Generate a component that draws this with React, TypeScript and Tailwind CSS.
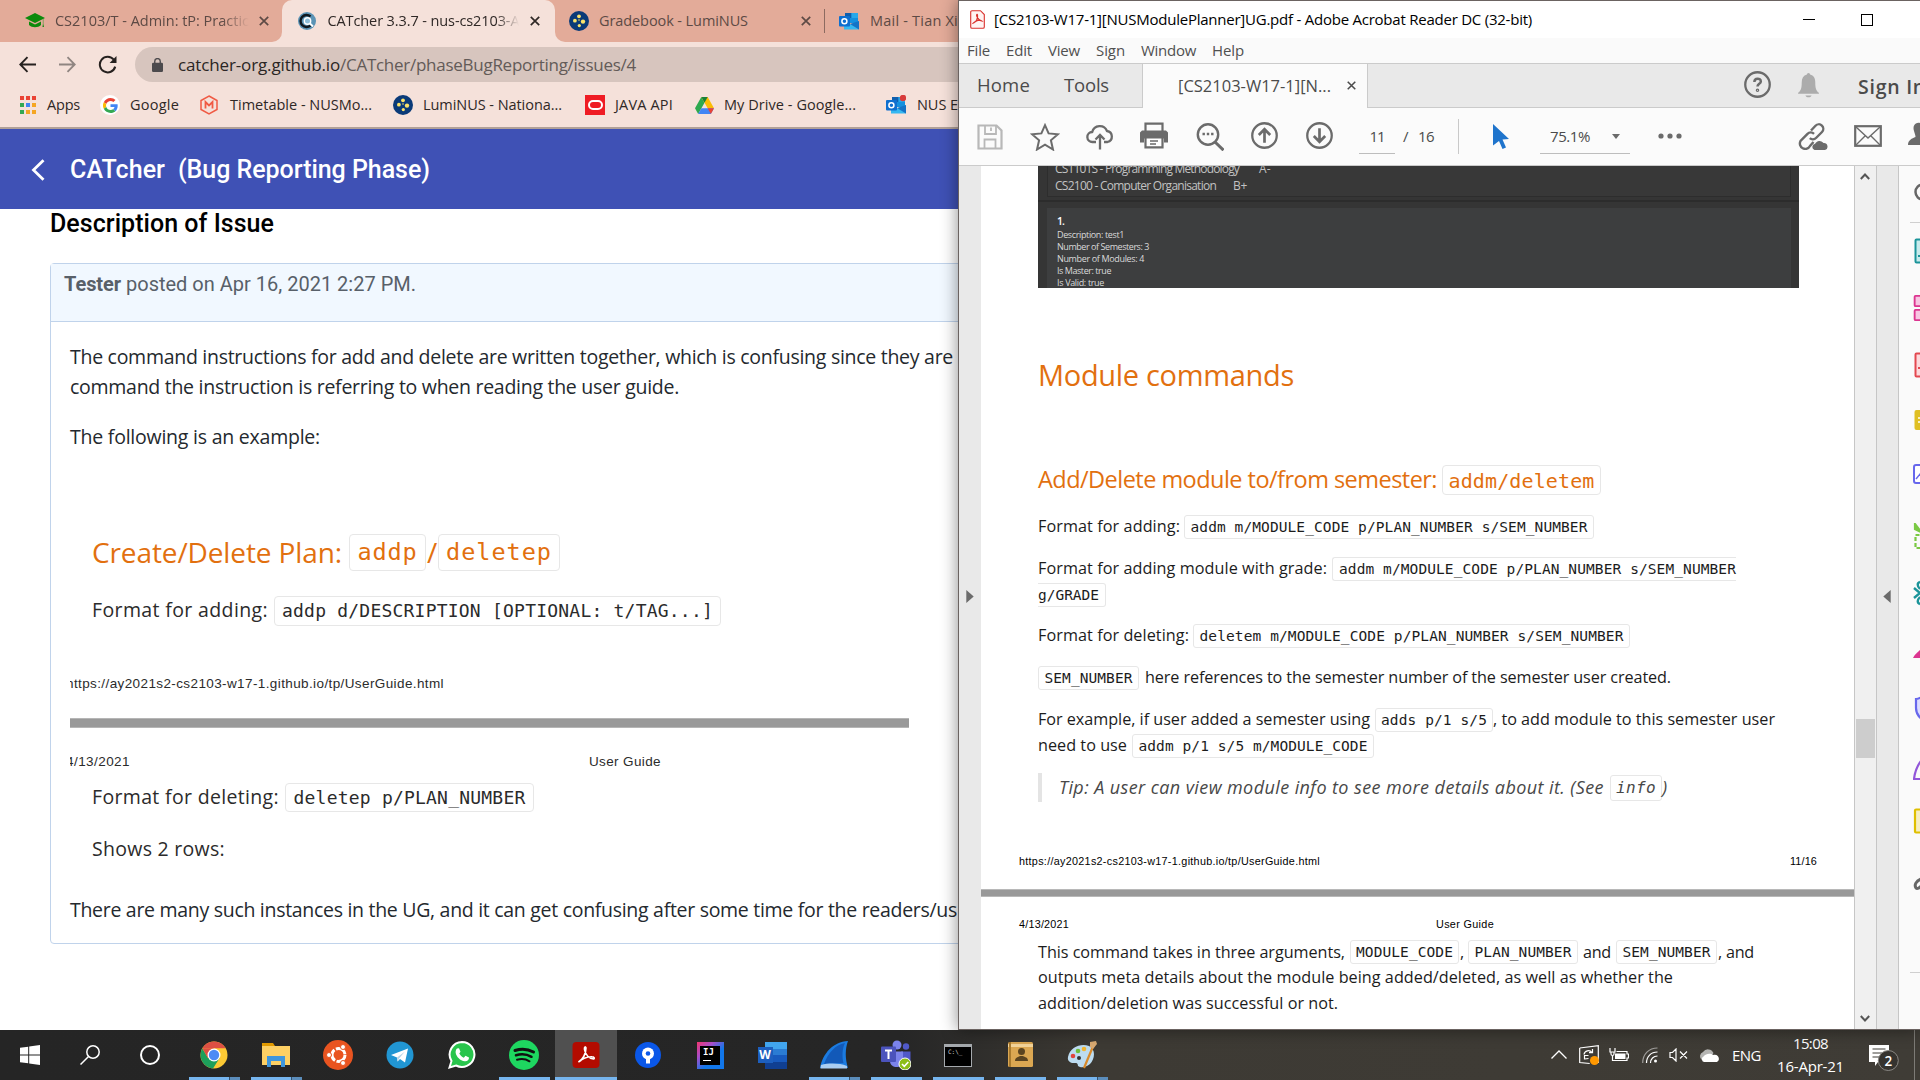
import React, { useLayoutEffect, useRef } from "react";

type FitProps = { className: string; children: string };

/* Single line of text whose tracking is adjusted so that it fills its box. */
function Fit({ className, children }: FitProps) {
  const box = useRef<HTMLSpanElement>(null);
  const text = useRef<HTMLSpanElement>(null);
  useLayoutEffect(() => {
    const b = box.current;
    const t = text.current;
    if (!b || !t) return;
    t.style.letterSpacing = "0px";
    const room = b.getBoundingClientRect().width - t.getBoundingClientRect().width;
    t.style.letterSpacing = `${room / children.length}px`;
  }, [children]);
  return (
    <span ref={box} className={`block shrink-0 whitespace-pre leading-none ${className}`}>
      <span ref={text}>{children}</span>
    </span>
  );
}

function Code({ box, text, children }: { box: string; text: string; children: string }) {
  return (
    <span className={`flex shrink-0 items-center justify-center border-[#e7e7e7] ${box}`}>
      <Fit className={`font-['DejaVu_Sans_Mono',monospace] ${text}`}>{children}</Fit>
    </span>
  );
}

const CloseX = ({ className }: { className: string }) => (
  <svg viewBox="0 0 10 10" className={`shrink-0 ${className}`} fill="none" stroke="currentColor" strokeWidth="1.7">
    <path d="M.8.8l8.4 8.4M9.2.8L.8 9.2" />
  </svg>
);

const Lumi = ({ className }: { className: string }) => (
  <svg viewBox="0 0 20 20" className={`size-5 shrink-0 ${className}`}>
    <circle cx="10" cy="10" r="10" fill="#0a3a78" />
    <g fill="#fbe36a">
      <circle cx="10" cy="5.3" r="1.9" />
      <circle cx="5.9" cy="9.7" r="1.9" />
      <circle cx="10.3" cy="14.6" r="1.6" />
      <circle cx="14" cy="10.6" r="2.2" />
      <circle cx="10" cy="9" r=".8" />
    </g>
  </svg>
);

const Outlook = ({ className, dot }: { className: string; dot?: boolean }) => (
  <svg viewBox="0 0 20 20" className={`size-5 shrink-0 ${className}`}>
    <path d="M6 2h13v10H6z" fill="#1490df" />
    <path d="M6 2h6.500v5H6z" fill="#0f5fae" />
    <path d="M12.500 2H19v5h-6.500z" fill="#28a8ea" />
    <path d="M5 18.500V10l8 4 7-4v8.500z" fill="#35b8f1" />
    <path d="M20 10v8.500L11 13z" fill="#1473c6" />
    <rect y="5" width="11" height="10.500" rx="1" fill="#0f6fcf" />
    <circle cx="5.400" cy="10.200" r="2.500" fill="none" stroke="#fff" strokeWidth="1.500" />
    {dot && <circle cx="17" cy="3" r="3.200" fill="#d83b3b" />}
  </svg>
);

function TabStrip() {
  return (
    <div className="flex h-[42px] shrink-0 items-stretch bg-[linear-gradient(#e3ab99_0_32px,#f5e1da_32px)] text-[14.5px] text-[#5d4a45]">
      <div className="flex w-[283px] items-center rounded-br-[10px] bg-[#e3ab99]">
        <svg viewBox="0 0 20 16" className="ml-[25px] h-4 w-5 shrink-0" fill="#0c8a0c">
          <path d="M10 0l10 5-10 5L0 5z" />
          <path d="M4 8.500l6 3 6-3V12c-3 3-9 3-12 0zM18.300 6v5l.7 3h-1.500l.4-3V6z" />
        </svg>
        <Fit className="ml-[10px] w-[194px] [mask-image:linear-gradient(to_right,black_86%,transparent)]">CS2103/T - Admin: tP: Practic</Fit>
        <CloseX className="ml-[10px] size-[10px]" />
      </div>
      <div className="flex w-[273px] items-center bg-[#e3ab99]">
        <div className="flex h-full flex-1 items-center rounded-t-[10px] bg-[#f5e1da] text-[#2f2826]">
          <svg viewBox="0 0 18 18" className="ml-4 size-[18px] shrink-0">
            <circle cx="9" cy="9" r="9" fill="#5b93b5" />
            <path d="M12.500 4.500a6 6 0 1 0 0 9" fill="none" stroke="#10181f" strokeWidth="2.400" />
            <circle cx="9.500" cy="9" r="3.200" fill="#8dbdd8" stroke="#fff" strokeWidth="1.400" />
            <path d="M12 11.500l3 3" stroke="#fff" strokeWidth="1.800" />
          </svg>
          <Fit className="ml-[11px] w-[192px] [mask-image:linear-gradient(to_right,black_88%,transparent)]">CATcher 3.3.7 - nus-cs2103-A</Fit>
          <CloseX className="ml-[11px] size-[10px]" />
        </div>
      </div>
      <div className="flex flex-1 items-center rounded-bl-[10px] bg-[#e3ab99]">
        <Lumi className="ml-[14px]" />
        <Fit className="ml-[10px] w-[149px]">Gradebook - LumiNUS</Fit>
        <CloseX className="ml-[53px] size-[10px]" />
        <div className="ml-[13px] h-6 w-px bg-[#8c6a60]" />
        <Outlook className="ml-[14px]" />
        <Fit className="ml-[11px] w-[88px]">Mail - Tian Xi</Fit>
      </div>
    </div>
  );
}

function AddressRow() {
  return (
    <div className="mt-[5px] flex h-[35px] items-center">
      <svg viewBox="0 0 16 16" className="ml-[19px] size-[17px] shrink-0" fill="none" stroke="#26211f" strokeWidth="1.800">
        <path d="M16 8H1.500M8 1L1.200 8 8 15" />
      </svg>
      <svg viewBox="0 0 16 16" className="ml-[23px] size-[17px] shrink-0" fill="none" stroke="#8f8581" strokeWidth="1.700">
        <path d="M0 8h14.500M8 1l6.800 7L8 15" />
      </svg>
      <svg viewBox="0 0 18 18" className="ml-[22px] size-[19px] shrink-0" fill="none" stroke="#26211f" strokeWidth="1.900">
        <path d="M15 4.500A7.400 7.400 0 1 0 16.300 11" />
        <path d="M17.500 1v6.500H11z" fill="#26211f" stroke="none" />
      </svg>
      <div className="ml-[18px] flex h-[35px] flex-1 items-center rounded-l-full bg-[#d7c5be] text-[17px]">
        <svg viewBox="0 0 12 15" className="ml-[17px] h-[14px] w-[11px] shrink-0">
          <rect y="5" width="12" height="10" rx="1.300" fill="#4c4a4d" />
          <path d="M3 6V3.500a3 3 0 0 1 6 0V6" fill="none" stroke="#4c4a4d" strokeWidth="1.500" />
        </svg>
        <Fit className="ml-[15px] w-[162px] text-[#2a2524]">catcher-org.github.io</Fit>
        <Fit className="w-[296px] text-[#635b58]">/CATcher/phaseBugReporting/issues/4</Fit>
      </div>
    </div>
  );
}

const appColors = ["#ea4335", "#ea4335", "#ea4335", "#34a853", "#4285f4", "#f5a623", "#34a853", "#f5a623", "#f5a623"];

function Bookmarks() {
  return (
    <div className="mt-[13px] flex h-5 items-center text-[14.5px] text-[#2f2826]">
      <div className="ml-5 grid grid-cols-3 gap-[3px]">
        {appColors.map((c, i) => (
          <span key={i} className="size-1" style={{ backgroundColor: c }} />
        ))}
      </div>
      <Fit className="ml-3 w-[33px]">Apps</Fit>
      <span className="ml-5 flex size-5 shrink-0 items-center justify-center rounded-full bg-white">
        <svg viewBox="0 0 48 48" className="size-[15px]">
          <path fill="#EA4335" d="M24 9.500c3.540 0 6.710 1.220 9.210 3.600l6.850-6.850C35.900 2.380 30.470 0 24 0 14.620 0 6.510 5.380 2.560 13.220l7.980 6.190C12.430 13.720 17.740 9.500 24 9.500z" />
          <path fill="#4285F4" d="M46.980 24.550c0-1.570-.15-3.090-.38-4.550H24v9.020h12.940c-.58 2.960-2.260 5.480-4.780 7.180l7.730 6c4.510-4.180 7.090-10.360 7.090-17.650z" />
          <path fill="#FBBC05" d="M10.530 28.590a14.500 14.500 0 0 1 0-9.180l-7.980-6.190a24 24 0 0 0 0 21.560z" />
          <path fill="#34A853" d="M24 48c6.480 0 11.930-2.130 15.890-5.810l-7.730-6c-2.150 1.450-4.920 2.300-8.160 2.300-6.260 0-11.570-4.220-13.470-9.910l-7.980 6.190C6.510 42.620 14.620 48 24 48z" />
        </svg>
      </span>
      <Fit className="ml-[10px] w-[49px]">Google</Fit>
      <svg viewBox="0 0 18 20" className="ml-[21px] h-5 w-[18px] shrink-0" fill="none" stroke="#f05a44" strokeWidth="1.500">
        <path d="M9 1l8 4.500v9L9 19l-8-4.500v-9z" />
        <path d="M5.500 13.500V7L9 10.500 12.500 7v6.500" strokeWidth="1.800" />
      </svg>
      <Fit className="ml-[12px] w-[142px]">Timetable - NUSMo...</Fit>
      <Lumi className="ml-[21px]" />
      <Fit className="ml-[10px] w-[139px]">LumiNUS - Nationa...</Fit>
      <span className="ml-[23px] flex size-5 shrink-0 items-center justify-center bg-[#ef1c24]">
        <span className="h-[10px] w-[15px] rounded-full border-2 border-white" />
      </span>
      <Fit className="ml-[10px] w-[58px]">JAVA API</Fit>
      <svg viewBox="0 0 18 16" className="ml-[22px] h-[17px] w-[19px] shrink-0">
        <path d="M6 0L0 10.500 3 16l6-10.500z" fill="#2da94f" />
        <path d="M6 0h6l6 10.500h-6z" fill="#fbbc04" />
        <path d="M6 10.500h12L15 16H3z" fill="#4285f4" />
        <path d="M12 10.500h6L15 16z" fill="#ea4335" />
        <path d="M6 0h6L9 5.500z" fill="#188038" />
      </svg>
      <Fit className="ml-[10px] w-[132px]">My Drive - Google...</Fit>
      <Outlook className="ml-[30px]" dot />
      <Fit className="ml-[11px] w-[41px]">NUS E</Fit>
    </div>
  );
}

function IssueImage() {
  return (
    <div className="mt-[81px] h-[349px] w-[839px] overflow-hidden text-[#2b2b2b]">
      <div className="flex h-[38px] items-center pl-[22px] text-[28px] text-[#e2700f]">
        <Fit className="w-[250px]">Create/Delete Plan:</Fit>
        <Code box="ml-[7px] h-[37px] w-[77px] rounded-[4px] border pt-[2px]" text="w-[60px] text-[23.5px]">addp</Code>
        <Fit className="mx-[1px] w-[10px]">/</Fit>
        <Code box="h-[37px] w-[122px] rounded-[4px] border pt-[2px]" text="w-[106px] text-[23.5px]">deletep</Code>
      </div>
      <div className="mt-[25px] flex h-[30px] items-center pl-[22px] text-[19.5px]">
        <Fit className="-mt-[2px] w-[176px]">Format for adding:</Fit>
        <Code box="ml-[6px] h-[30px] w-[447px] rounded-[4px] border" text="w-[431px] text-[18px]">addp d/DESCRIPTION [OPTIONAL: t/TAG...]</Code>
      </div>
      <div className="-ml-[4px] mt-[48px] flex h-5 items-center font-['Liberation_Sans',sans-serif] text-[13.5px]">
        <Fit className="w-[378px]">https://ay2021s2-cs2103-w17-1.github.io/tp/UserGuide.html</Fit>
      </div>
      <div className="mt-[24px] h-[10px] border-y border-[#b5b5b5] bg-[#999]" />
      <div className="-ml-[4px] mt-[24px] flex h-5 items-center font-['Liberation_Sans',sans-serif] text-[13.5px]">
        <Fit className="w-[64px]">4/13/2021</Fit>
        <Fit className="ml-[459px] w-[72px]">User Guide</Fit>
      </div>
      <div className="mt-[11px] flex h-[29px] items-center pl-[22px] text-[19.5px]">
        <Fit className="-mt-[2px] w-[187px]">Format for deleting:</Fit>
        <Code box="ml-[6px] h-[29px] w-[249px] rounded-[4px] border" text="w-[232px] text-[18px]">deletep p/PLAN_NUMBER</Code>
      </div>
      <div className="mt-[22px] flex h-[29px] items-center pl-[22px] text-[19.5px]">
        <Fit className="w-[133px]">Shows 2 rows:</Fit>
      </div>
    </div>
  );
}

function Browser() {
  return (
    <section className="flex h-full w-[958px] shrink-0 flex-col overflow-hidden bg-white">
      <TabStrip />
      <div className="h-[87px] shrink-0 border-b-2 border-[#b0a098] bg-[#f5e1da]">
        <AddressRow />
        <Bookmarks />
      </div>
      <header className="flex h-20 shrink-0 items-center bg-[#3f51b5] pt-[1px] font-[Roboto,sans-serif] text-[25px] font-medium text-white">
        <svg viewBox="0 0 14 22" className="ml-[31px] h-[22px] w-[14px]" fill="none" stroke="#fff" strokeWidth="2.800">
          <path d="M12.500 1.200L2.500 11l10 9.800" />
        </svg>
        <Fit className="ml-[25px] w-[95px]">CATcher</Fit>
        <Fit className="ml-[13px] w-[252px]">(Bug Reporting Phase)</Fit>
      </header>
      <h2 className="flex h-[28px] shrink-0 items-center pl-[50px] font-[Roboto,sans-serif] text-[25px] font-medium text-black">
        <Fit className="w-[224px]">Description of Issue</Fit>
      </h2>
      <article className="ml-[50px] mt-[26px] h-[681px] w-[930px] shrink-0 rounded-[4px] border border-[#c0d3eb]">
        <div className="flex h-[58px] items-start border-b border-[#c0d3eb] bg-[#f1f8ff] pl-[13px] pt-[10px] font-[Roboto,sans-serif] text-[20px] text-[#586069]">
          <Fit className="w-[57px] font-bold">Tester</Fit>
          <Fit className="ml-[5px] w-[290px]">posted on Apr 16, 2021 2:27 PM.</Fit>
        </div>
        <div className="pl-[19px] text-[19.5px] text-[#24292e]">
          <div className="mt-[20px] flex h-[30px] items-center">
            <Fit className="w-[883px]">The command instructions for add and delete are written together, which is confusing since they are</Fit>
          </div>
          <div className="flex h-[30px] items-center">
            <Fit className="w-[609px]">command the instruction is referring to when reading the user guide.</Fit>
          </div>
          <div className="mt-[20px] flex h-[30px] items-center">
            <Fit className="w-[250px]">The following is an example:</Fit>
          </div>
          <IssueImage />
          <div className="mt-[13px] flex h-[30px] items-center">
            <Fit className="w-[887px]">There are many such instances in the UG, and it can get confusing after some time for the readers/us</Fit>
          </div>
        </div>
      </article>
    </section>
  );
}

function AcrobatToolbar() {
  return (
    <div className="flex h-[58px] shrink-0 items-center border-b border-[#cbcbcb] bg-[#fbfbfb] text-[15px] text-[#4b4b4b]">
      <svg viewBox="0 0 26 26" className="ml-[18px] size-[26px] shrink-0" fill="none" stroke="#b8b8b8" strokeWidth="2.200">
        <path d="M1.500 1.500h18l5 5v18h-23z" />
        <path d="M8 1.500V10h11V1.500M14 3.500V7M7.500 24v-8.500h11V24" strokeWidth="1.800" />
      </svg>
      <svg viewBox="0 0 30 28" className="ml-[27px] h-[28px] w-[30px] shrink-0" fill="none" stroke="#6b6b6b" strokeWidth="2">
        <path d="M15 2.200l3.600 8.200 9.300.8-7 6.100 2.100 9.200-8-4.800-8 4.800 2.100-9.200-7-6.100 9.300-.8z" />
      </svg>
      <svg viewBox="0 0 28 26" className="ml-[26px] h-[27px] w-7 shrink-0" fill="none" stroke="#6b6b6b" strokeWidth="2.300">
        <path d="M10 18.500H6.500a5 5 0 0 1-.3-10A7.800 7.800 0 0 1 21 7.500a5.600 5.600 0 0 1 .5 11H18M14 26V12M9.500 16l4.500-4.500 4.500 4.500" />
      </svg>
      <svg viewBox="0 0 28 26" className="-mt-[2px] ml-[26px] h-[27px] w-7 shrink-0">
        <path d="M5.500 9V1.200h17V9" fill="none" stroke="#6b6b6b" strokeWidth="2.200" />
        <path d="M2 8h24l2 2v10h-4v-4H4v4H0V10z" fill="#6b6b6b" />
        <path d="M5.500 15h17v9.800h-17z" fill="#fff" stroke="#6b6b6b" strokeWidth="2.200" />
        <path d="M10 18.500h8M10 21.500h6" stroke="#6b6b6b" strokeWidth="1.300" />
      </svg>
      <svg viewBox="0 0 28 28" className="ml-[28px] size-7 shrink-0" fill="none" stroke="#6b6b6b" strokeWidth="2.400">
        <circle cx="12" cy="11.500" r="10.200" />
        <path d="M19 19l8.500 8.200" strokeWidth="3" />
        <path d="M6.500 11h2.400M10.800 11h2.400M15.100 11h2.400" />
      </svg>
      <svg viewBox="0 0 26 26" className="-mt-[2px] ml-[27px] size-[27px] shrink-0" fill="none" stroke="#6b6b6b" strokeWidth="2.200">
        <circle cx="13" cy="13" r="11.800" />
        <path d="M13 20V7M7.500 12.500L13 7l5.500 5.500" strokeWidth="2.600" />
      </svg>
      <svg viewBox="0 0 26 26" className="-mt-[2px] ml-[28px] size-[27px] shrink-0" fill="none" stroke="#6b6b6b" strokeWidth="2.200">
        <circle cx="13" cy="13" r="11.800" />
        <path d="M13 6v13M7.500 13.500L13 19l5.500-5.500" strokeWidth="2.600" />
      </svg>
      <div className="ml-[26px] flex h-[35px] w-[36px] items-center justify-center border-b border-[#bdbdbd]">
        <Fit className="w-[15px]">11</Fit>
      </div>
      <Fit className="ml-[8px] w-[6px]">/</Fit>
      <Fit className="ml-[9px] w-[16px]">16</Fit>
      <div className="ml-[24px] h-[35px] w-px bg-[#c9c9c9]" />
      <svg viewBox="0 0 16 25" className="ml-[34px] h-[25px] w-4 shrink-0" fill="#1f74cc">
        <path d="M0 0l16 15-6.500.5 3.500 8-3.500 1.500-3.500-8L0 21.500z" />
      </svg>
      <div className="ml-[31px] flex h-[35px] w-[90px] items-center border-b border-[#bdbdbd] pl-[10px]">
        <Fit className="w-[40px]">75.1%</Fit>
        <svg viewBox="0 0 8 5" className="ml-[22px] h-[5px] w-2" fill="#6b6b6b">
          <path d="M0 0h8L4 5z" />
        </svg>
      </div>
      <svg viewBox="0 0 24 6" className="-mt-[2px] ml-[28px] h-[6px] w-6 shrink-0" fill="#6b6b6b">
        <circle cx="3" cy="3" r="2.600" />
        <circle cx="12" cy="3" r="2.600" />
        <circle cx="21" cy="3" r="2.600" />
      </svg>
      <svg viewBox="0 0 30 27" className="ml-[116px] h-[27px] w-[30px] shrink-0" fill="none" stroke="#6b6b6b" strokeWidth="2.400">
        <path d="M13 7.500l4.500-4.800a4.500 4.500 0 0 1 6.500 6.300l-6 6a4.500 4.500 0 0 1-6.200.2" />
        <path d="M15.500 19L12 23a4.700 4.700 0 0 1-9.500-5l7-7.200a4.500 4.500 0 0 1 6.500 0" />
        <path d="M16.500 27a3.200 3.200 0 0 1 .6-6.200 5 5 0 0 1 8.400-.8A3.600 3.600 0 0 1 27 27z" fill="#6b6b6b" stroke="none" />
      </svg>
      <svg viewBox="0 0 28 22" className="-mt-[2px] ml-[26px] h-[22px] w-7 shrink-0" fill="none" stroke="#6b6b6b" strokeWidth="1.400">
        <rect x="1.200" y="1.200" width="25.600" height="19.600" strokeWidth="2.200" />
        <path d="M2 2l12 11L26 2M2 20l9.500-9.500M26 20l-9.500-9.500" />
      </svg>
      <svg viewBox="0 0 12 24" className="-mt-[6px] ml-auto h-[24px] w-3 shrink-0" fill="#6b6b6b">
        <path d="M12 1C7 0 4.500 4 6 9c.7 2.500 1.500 4 1.500 6C4 16.500 0 18 0 23h12z" />
      </svg>
    </div>
  );
}

function PlannerShot() {
  return (
    <div className="ml-[57px] h-[122px] w-[761px] shrink-0 overflow-hidden bg-[#353535] font-['Open_Sans',sans-serif] text-[#c2c2c2]">
      <div className="ml-[9px] h-[31px] w-[744px] overflow-hidden border-x border-b border-[#2d2d2d] bg-[#383838] pl-[7px] text-[12px]">
        <div className="-mt-[6px] flex h-[17px] items-center">
          <Fit className="w-[184px]">CS1101S - Programming Methodology</Fit>
          <Fit className="ml-[20px] w-[12px]">A-</Fit>
        </div>
        <div className="flex h-[17px] items-center">
          <Fit className="w-[161px]">CS2100 - Computer Organisation</Fit>
          <Fit className="ml-[17px] w-[14px]">B+</Fit>
        </div>
      </div>
      <div className="mt-[3px] h-[2px] bg-[#2c2c2c]" />
      <div className="ml-[9px] mt-[6px] h-[80px] w-[744px] bg-[#3d3e3f] pl-[10px] pt-[6px] text-[9px] text-[#dadada]">
        <div className="flex h-[14px] items-center text-[10.500px] font-semibold text-white"><Fit className="w-[7px]">1.</Fit></div>
        <div className="flex h-[12px] items-center"><Fit className="w-[67px]">Description: test1</Fit></div>
        <div className="flex h-[12px] items-center"><Fit className="w-[92px]">Number of Semesters: 3</Fit></div>
        <div className="flex h-[12px] items-center"><Fit className="w-[87px]">Number of Modules: 4</Fit></div>
        <div className="flex h-[12px] items-center"><Fit className="w-[54px]">Is Master: true</Fit></div>
        <div className="flex h-[12px] items-center"><Fit className="w-[47px]">Is Valid: true</Fit></div>
      </div>
    </div>
  );
}

function PdfPage() {
  return (
    <div className="flex w-[873px] shrink-0 flex-col overflow-hidden bg-white text-[16.2px] text-[#1c1c1c]">
      <PlannerShot />
      <h1 className="mt-[66px] flex h-10 shrink-0 items-center pl-[57px] text-[29px] text-[#e2700f]">
        <Fit className="w-[256px]">Module commands</Fit>
      </h1>
      <h2 className="mt-[66px] flex h-10 shrink-0 items-center pl-[57px] text-[23.500px] text-[#e2700f]">
        <Fit className="w-[399px]">Add/Delete module to/from semester:</Fit>
        <Code box="ml-[5px] h-[30px] w-[159px] rounded-[4px] border pt-[1px]" text="w-[146px] text-[20px]">addm/deletem</Code>
      </h2>
      <div className="mt-[15px] flex h-6 shrink-0 items-center pl-[57px]">
        <Fit className="-mt-[2px] w-[142px]">Format for adding:</Fit>
        <Code box="ml-[4px] h-6 w-[410px] rounded-[3px] border" text="w-[397px] text-[14.500px]">addm m/MODULE_CODE p/PLAN_NUMBER s/SEM_NUMBER</Code>
      </div>
      <div className="mt-[18px] flex h-6 shrink-0 items-center pl-[57px]">
        <Fit className="-mt-[2px] w-[289px]">Format for adding module with grade:</Fit>
        <Code box="ml-[5px] h-6 w-[404px] rounded-l-[3px] border-y border-l pl-[6px]" text="w-[397px] text-[14.500px]">addm m/MODULE_CODE p/PLAN_NUMBER s/SEM_NUMBER</Code>
      </div>
      <div className="mt-[2px] flex h-6 shrink-0 items-center pl-[57px]">
        <Code box="h-6 w-[68px] rounded-r-[3px] border-y border-r pr-[6px]" text="w-[61px] text-[14.500px]">g/GRADE</Code>
      </div>
      <div className="mt-[17px] flex h-6 shrink-0 items-center pl-[57px]">
        <Fit className="-mt-[2px] w-[151px]">Format for deleting:</Fit>
        <Code box="ml-[4px] h-6 w-[437px] rounded-[3px] border" text="w-[424px] text-[14.500px]">deletem m/MODULE_CODE p/PLAN_NUMBER s/SEM_NUMBER</Code>
      </div>
      <div className="mt-[18px] flex h-6 shrink-0 items-center pl-[57px]">
        <Code box="h-6 w-[101px] rounded-[3px] border" text="w-[88px] text-[14.500px]">SEM_NUMBER</Code>
        <Fit className="-mt-[2px] ml-[6px] w-[526px]">here references to the semester number of the semester user created.</Fit>
      </div>
      <div className="mt-[18px] flex h-6 shrink-0 items-center pl-[57px]">
        <Fit className="-mt-[2px] w-[332px]">For example, if user added a semester using</Fit>
        <Code box="ml-[5px] h-6 w-[118px] rounded-[3px] border" text="w-[106px] text-[14.500px]">adds p/1 s/5</Code>
        <Fit className="-mt-[2px] w-[282px]">, to add module to this semester user</Fit>
      </div>
      <div className="mt-[2px] flex h-6 shrink-0 items-center pl-[57px]">
        <Fit className="-mt-[2px] w-[89px]">need to use</Fit>
        <Code box="ml-[5px] h-6 w-[242px] rounded-[3px] border" text="w-[229px] text-[14.500px]">addm p/1 s/5 m/MODULE_CODE</Code>
      </div>
      <div className="ml-[57px] mt-[15px] flex h-[29px] shrink-0 items-center border-l-4 border-[#e4e4e4] pl-[17px] text-[18px] italic text-[#484848]">
        <Fit className="-mt-[2px] w-[545px]">Tip: A user can view module info to see more details about it. (See</Fit>
        <Code box="ml-[6px] h-[26px] w-[52px] rounded-[3px] border" text="w-[40px] text-[16px]">info</Code>
        <Fit className="-mt-[2px] w-[7px]">)</Fit>
      </div>
      <div className="mt-[49px] flex h-5 shrink-0 items-center pl-[38px] font-['Liberation_Sans',sans-serif] text-[10.800px] text-black">
        <Fit className="w-[301px]">https://ay2021s2-cs2103-w17-1.github.io/tp/UserGuide.html</Fit>
        <Fit className="ml-[470px] w-[27px]">11/16</Fit>
      </div>
      <div className="mt-[18px] h-2 shrink-0 border-y border-[#b8b8b8] bg-[#999]" />
      <div className="mt-[17px] flex h-5 shrink-0 items-center pl-[38px] font-['Liberation_Sans',sans-serif] text-[10.800px] text-black">
        <Fit className="w-[50px]">4/13/2021</Fit>
        <Fit className="ml-[367px] w-[58px]">User Guide</Fit>
      </div>
      <div className="mt-[6px] flex h-6 shrink-0 items-center pl-[57px]">
        <Fit className="w-[307px]">This command takes in three arguments,</Fit>
        <Code box="ml-[5px] h-6 w-[109px] rounded-[3px] border pt-[1px]" text="w-[97px] text-[14.500px]">MODULE_CODE</Code>
        <Fit className="ml-[1px] w-[8px]">,</Fit>
        <Code box="h-6 w-[110px] rounded-[3px] border pt-[1px]" text="w-[97px] text-[14.500px]">PLAN_NUMBER</Code>
        <Fit className="ml-[5px] w-[28px]">and</Fit>
        <Code box="ml-[5px] h-6 w-[101px] rounded-[3px] border pt-[1px]" text="w-[88px] text-[14.500px]">SEM_NUMBER</Code>
        <Fit className="ml-[1px] w-[36px]">, and</Fit>
      </div>
      <div className="mt-[1px] flex h-6 shrink-0 items-center pl-[57px]">
        <Fit className="w-[635px]">outputs meta details about the module being added/deleted, as well as whether the</Fit>
      </div>
      <div className="mt-[2px] flex h-6 shrink-0 items-center pl-[57px]">
        <Fit className="w-[300px]">addition/deletion was successful or not.</Fit>
      </div>
    </div>
  );
}

/* The narrow visible edge of the tools pane. */
function ToolsEdge() {
  return (
    <div className="flex min-w-0 flex-1 flex-col items-end overflow-hidden bg-[#fafafa] [&>svg]:h-[26px] [&>svg]:w-[7px] [&>svg]:shrink-0">
      <svg viewBox="0 0 7 26" className="mt-[13px]" fill="none" stroke="#666" strokeWidth="2.500"><circle cx="10" cy="13" r="7.500" /></svg>
      <div className="mt-[17px] h-px w-[10px] shrink-0 bg-[#cfcfcf]" />
      <svg viewBox="0 0 7 26" className="mt-[15px]" fill="#c8ebec" stroke="#1b9499" strokeWidth="2"><rect x="2.500" y="1.500" width="20" height="23" rx="1" /><path d="M5 18h5" /></svg>
      <svg viewBox="0 0 7 28" className="mt-[31px]" fill="#f8c5e2" stroke="#dc3590" strokeWidth="2"><rect x="1.500" y="1" width="20" height="11" rx="1" /><rect x="1.500" y="16" width="20" height="11" rx="1" /></svg>
      <svg viewBox="0 0 7 26" className="mt-[31px]" fill="#fdd9dc" stroke="#e34850" strokeWidth="2"><rect x="2.500" y="1.500" width="20" height="23" rx="1" /><path d="M5 16h5" /></svg>
      <svg viewBox="0 0 7 26" className="mt-[29px]" fill="#dfbf23"><rect x="1.500" y="3" width="20" height="20" rx="2" /><path d="M5 11h4M5 15h4" stroke="#fff" strokeWidth="1.300" /></svg>
      <svg viewBox="0 0 7 26" className="mt-[29px]" fill="#fff" stroke="#6767ec" strokeWidth="2"><rect x="1" y="3" width="20" height="18" rx="2" /><path d="M3 17l5-6" strokeWidth="1.400" /></svg>
      <svg viewBox="0 0 7 26" className="mt-[35px]" fill="none" stroke="#7ac943" strokeWidth="2.200" strokeDasharray="4 2"><path d="M2 1v5l6 3z" fill="#7ac943" strokeDasharray="none" /><rect x="2.500" y="12" width="20" height="13" /></svg>
      <svg viewBox="0 0 7 26" className="mt-[31px]" fill="none" stroke="#1b9499" strokeWidth="2.400"><path d="M1 8l6 5-6 5M7 2c-3 1-3 4 0 7M7 24c-3-1-3-4 0-7" /></svg>
      <svg viewBox="0 0 7 26" className="mt-[32px]" fill="#dc3590"><path d="M0 20c2-4 4-5 7-8v8z" /></svg>
      <svg viewBox="0 0 7 26" className="mt-[31px]" fill="#dcdcff" stroke="#6767ec" strokeWidth="2.200"><path d="M9 2c-2 1-4 2-6 2v9c0 5 3 9 6 11" /></svg>
      <svg viewBox="0 0 7 26" className="mt-[36px]" fill="none" stroke="#9256d9" strokeWidth="2.200"><path d="M8 4C4 9 2 14 1 22h8" /></svg>
      <svg viewBox="0 0 7 26" className="mt-[25px]" fill="#f6eec2" stroke="#dfbf00" strokeWidth="2.200"><rect x="2" y="1.500" width="20" height="23" rx="1" /></svg>
      <svg viewBox="0 0 7 26" className="mt-[37px]" fill="none" stroke="#666" strokeWidth="3"><path d="M8 8c-5 2-7 6-5 9 1 1 4 0 5-2" /></svg>
      <div className="mt-[75px] h-px w-[10px] shrink-0 bg-[#cfcfcf]" />
    </div>
  );
}

function Acrobat() {
  return (
    <section className="relative z-10 flex h-full min-w-0 flex-1 flex-col border-b border-l border-t border-[#6b6361] shadow-[0_0_16px_rgba(0,0,0,0.45)]">
      <div className="flex h-[37px] shrink-0 items-center bg-white text-[15px] text-black">
        <svg viewBox="0 0 15 19" className="ml-[11px] h-[19px] w-[15px] shrink-0">
          <path d="M2 .7h8.500L14.300 4.500V17a1.300 1.300 0 0 1-1.300 1.300H2A1.300 1.300 0 0 1 .7 17V2A1.300 1.300 0 0 1 2 .7z" fill="#fff3f2" stroke="#d9302c" strokeWidth="1.100" />
          <path d="M3.500 13c3-1 4.500-5 4-8-.6-1.500-1.300 0-.6 1.500 1 2.500 2.600 4 4.800 4.500-1.500-1.500-6-.5-8.200 2z" fill="none" stroke="#d9302c" strokeWidth="1.200" />
        </svg>
        <Fit className="ml-[9px] w-[538px]">[CS2103-W17-1][NUSModulePlanner]UG.pdf - Adobe Acrobat Reader DC (32-bit)</Fit>
        <div className="ml-auto h-px w-3 bg-black" />
        <div className="ml-[46px] mr-[47px] size-3 border border-black" />
      </div>
      <div className="flex h-[26px] shrink-0 items-center border-b border-[#cbcbcb] bg-[#fafafa] pl-[8px] text-[15px] text-[#505050]">
        <Fit className="w-[23px]">File</Fit>
        <Fit className="ml-[16px] w-[26px]">Edit</Fit>
        <Fit className="ml-[16px] w-[32px]">View</Fit>
        <Fit className="ml-[16px] w-[29px]">Sign</Fit>
        <Fit className="ml-[16px] w-[55px]">Window</Fit>
        <Fit className="ml-[16px] w-[32px]">Help</Fit>
      </div>
      <div className="flex h-11 shrink-0 items-stretch overflow-hidden bg-[#e9e9e9] text-[18.500px] text-[#4b4b4b]">
        <div className="flex w-[184px] shrink-0 items-center border-b border-r border-[#cbcbcb] pl-[18px]">
          <Fit className="w-[53px]">Home</Fit>
          <Fit className="ml-[34px] w-[45px]">Tools</Fit>
        </div>
        <div className="flex w-[224px] shrink-0 items-center bg-[#fbfbfb] pl-[35px] text-[16.500px]">
          <Fit className="w-[153px]">[CS2103-W17-1][N...</Fit>
          <CloseX className="-mt-[2px] ml-[16px] size-[9px]" />
        </div>
        <div className="flex min-w-0 flex-1 items-center overflow-hidden border-b border-l border-[#cbcbcb]">
          <svg viewBox="0 0 26 26" className="-mt-[2px] ml-[376px] size-[27px] shrink-0" fill="none" stroke="#6b6b6b" strokeWidth="2.200">
            <circle cx="13" cy="13" r="11.800" />
            <path d="M10 10.500c0-4 6.200-4 6.200-.5 0 2.500-3.200 2.300-3.200 5" strokeWidth="2.400" />
            <circle cx="13" cy="18.500" r=".6" />
          </svg>
          <svg viewBox="0 0 20 24" className="ml-[27px] h-[25px] w-[21px] shrink-0" fill="#acacac">
            <path d="M10 0c1 0 1.500.7 1.500 1.500C15 2.500 16.500 5 16.500 9c0 6 1 8 3.500 10v1H0v-1c2.500-2 3.500-4 3.500-10 0-4 1.500-6.500 5-7.500C8.500.7 9 0 10 0zM7 21.500h6c-1 2.500-5 2.500-6 0z" />
          </svg>
          <Fit className="ml-[39px] mt-[2px] w-[68px] text-[19.500px] font-semibold">Sign In</Fit>
        </div>
      </div>
      <AcrobatToolbar />
      <div className="flex min-h-0 flex-1 overflow-hidden">
        <div className="flex w-[22px] shrink-0 items-center bg-[#e9e9e9]">
          <svg viewBox="0 0 8 14" className="-mt-[2px] ml-[7px] h-[13px] w-2" fill="#6b6b6b"><path d="M0 0l8 7-8 7z" /></svg>
        </div>
        <PdfPage />
        <div className="flex w-[23px] shrink-0 flex-col items-center border-x border-[#c6c6c6] bg-[#f0f0f0]">
          <svg viewBox="0 0 10 7" className="mr-[1px] mt-[7px] h-[7px] w-[10px]" fill="none" stroke="#555" strokeWidth="2"><path d="M.8 6L5 1.500 9.200 6" /></svg>
          <div className="mt-[539px] h-[39px] w-[19px] bg-[#cdcdcd]" />
          <svg viewBox="0 0 10 7" className="mb-[7px] mr-[1px] mt-auto h-[7px] w-[10px]" fill="none" stroke="#555" strokeWidth="2"><path d="M.8 1L5 5.500 9.200 1" /></svg>
        </div>
        <div className="flex w-[22px] shrink-0 items-center border-r border-[#c6c6c6] bg-[#e9e9e9]">
          <svg viewBox="0 0 8 14" className="-mt-[2px] ml-[6px] h-[13px] w-2" fill="#6b6b6b"><path d="M8 0L0 7l8 7z" /></svg>
        </div>
        <ToolsEdge />
      </div>
    </section>
  );
}

function TaskCell({ children, open, stacked, active }: { children: React.ReactNode; open?: boolean; stacked?: boolean; active?: boolean }) {
  return (
    <div className={`flex w-[62px] shrink-0 flex-col items-center ${active ? "bg-[#505050]" : ""}`}>
      <div className="flex h-[47px] items-center justify-center pt-[3px]">{children}</div>
      {active && <div className="h-[3px] w-[62px] bg-[#76b5ee]" />}
      {open && (
        <div className="flex h-[3px] w-[51px] bg-[#76b5ee]">
          {stacked && <div className="ml-auto w-[11px] border-l border-[#35506b] bg-[#5b8dbb]" />}
        </div>
      )}
    </div>
  );
}

function Taskbar() {
  return (
    <footer className="flex h-[50px] w-full bg-[linear-gradient(to_right,#252525_0,#262626_900px,#3d3a34_1100px,#3f3c36_100%)] font-['Open_Sans',sans-serif] text-white">
      <div className="flex w-[60px] items-center justify-center">
        <svg viewBox="0 0 20 20" className="size-5" fill="#fff"><path d="M0 2.800l8.200-1.100v7.800H0zM9.200 1.500L20 0v9.500H9.200zM0 10.500h8.200v7.800L0 17.200zM9.200 10.500H20V20L9.200 18.500z" /></svg>
      </div>
      <div className="flex w-[60px] items-center justify-center">
        <svg viewBox="0 0 20 20" className="size-5" fill="none" stroke="#fff" strokeWidth="1.500"><circle cx="13" cy="7" r="6.200" /><path d="M8.500 11.500L.5 19.500" /></svg>
      </div>
      <div className="flex w-[63px] items-center pl-5">
        <div className="size-5 rounded-full border-[2.500px] border-white" />
      </div>
      <TaskCell open stacked>
        <svg viewBox="0 0 28 28" className="size-7">
          <circle cx="14" cy="14" r="13.500" fill="#fcc934" />
          <path d="M2.300 7.300A13.500 13.500 0 0 1 25.700 7.300H14z" fill="#dd4f43" />
          <path d="M2.300 7.300A13.500 13.500 0 0 0 13 27.500l6.500-10.300L14 14 8 17z" fill="#1d9f5b" />
          <path d="M2.300 7.300L8 17.200l6-9.900z" fill="#dd4f43" />
          <circle cx="14" cy="14" r="6.500" fill="#fff" /><circle cx="14" cy="14" r="5.200" fill="#4c8bf5" />
        </svg>
      </TaskCell>
      <TaskCell open stacked>
        <svg viewBox="0 0 28 24" className="h-6 w-7">
          <path d="M0 0h11l2 3H0z" fill="#e19a00" /><rect y="3" width="28" height="19" fill="#fdd064" />
          <path d="M5 13h18v11h-4v-6H9v6H5z" fill="#3f96dc" />
        </svg>
      </TaskCell>
      <TaskCell>
        <svg viewBox="0 0 30 30" className="size-[30px]">
          <circle cx="15" cy="15" r="15" fill="#e95420" />
          <circle cx="15.500" cy="15" r="6.500" fill="none" stroke="#fff" strokeWidth="3" strokeDasharray="12 1.600" />
          <g fill="#fff" stroke="#e95420"><circle cx="6" cy="15" r="2.500" /><circle cx="20" cy="7" r="2.500" /><circle cx="20" cy="23" r="2.500" /></g>
        </svg>
      </TaskCell>
      <TaskCell>
        <svg viewBox="0 0 28 28" className="size-7"><circle cx="14" cy="14" r="13.500" fill="#2196d3" /><path d="M5 14L22 7.500 19 21.500l-5-3.500-2.500 2.500-.5-4z" fill="#fff" /><path d="M11 16.500l8-6-6 7-1.500 3z" fill="#b8d4e6" /></svg>
      </TaskCell>
      <TaskCell>
        <svg viewBox="0 0 28 28" className="size-7"><path d="M14 1a12.500 12.500 0 1 1-6 23.500L1.500 26.500l2-6.500A12.500 12.500 0 0 1 14 1z" fill="#28c54c" stroke="#fff" strokeWidth="2" /><path d="M9 7.500l2-.3 1.500 3.500L11.300 12.500c1 2 2.500 3.300 4.500 4.200l1.700-1.900 3.500 1.800c.2 2.500-2 4-4.200 3.700C12 19.500 8.500 16 7.700 12c-.3-1.800.3-3.500 1.300-4.500z" fill="#fff" /></svg>
      </TaskCell>
      <TaskCell open>
        <svg viewBox="0 0 30 30" className="size-[30px]" fill="none" stroke="#101010" strokeLinecap="round"><circle cx="15" cy="15" r="15" fill="#1ed760" stroke="none" /><path d="M6 10.500c6-2 13-1.500 18.500 1.500" strokeWidth="3" /><path d="M7 15.300c5-1.500 11-1 15.500 1.500" strokeWidth="2.500" /><path d="M8 19.800c4-1.200 9-.7 12.500 1.500" strokeWidth="2" /></svg>
      </TaskCell>
      <TaskCell active>
        <svg viewBox="0 0 28 28" className="size-7"><rect x=".5" y="1" width="27" height="26" rx="4" fill="#b30b00" /><path d="M6.500 21c4-2 7.500-8 7.500-14-.4-2-2-1-1.500 1.500 1 5 4.500 9 9 9.500 1.500-.5.500-2.300-1.500-2.300C15 15.500 9 18 6.500 21z" fill="none" stroke="#fff" strokeWidth="1.600" /></svg>
      </TaskCell>
      <TaskCell>
        <svg viewBox="0 0 26 26" className="size-[26px]"><circle cx="13" cy="13" r="13" fill="#0a57e8" /><circle cx="13" cy="11.500" r="6" fill="#fff" /><circle cx="13" cy="11.500" r="2.300" fill="#0a57e8" /><path d="M11 15h4v6.500h-4z" fill="#fff" /></svg>
      </TaskCell>
      <TaskCell>
        <div className="flex size-[27px] items-center justify-center bg-[linear-gradient(135deg,#f2366f_0,#a94dc9_30%,#1277ea_60%,#1277ea_100%)]">
          <div className="h-[19px] w-5 bg-black pl-[3px] pt-[2px] font-['DejaVu_Sans_Mono',monospace] text-[9px] font-bold leading-[9px]">
            IJ
            <div className="mt-[3px] h-px w-2 bg-white" />
          </div>
        </div>
      </TaskCell>
      <TaskCell>
        <div className="flex h-[27px] w-[29px] items-center bg-[linear-gradient(#41a5ee_0_25%,#2b7cd3_25%_50%,#185abd_50%_75%,#103f91_75%)] bg-[length:22px_27px] bg-right bg-no-repeat">
          <span className="flex h-4 w-[15px] items-center justify-center bg-[#1d5fbe] text-[12px] font-bold leading-none">W</span>
        </div>
      </TaskCell>
      <TaskCell open stacked>
        <svg viewBox="0 0 28 28" className="size-7"><path d="M0 27C3 12 13 1 28 0c-3 8-3 18 0 27z" fill="#1b7be0" /><path d="M4 23C8 12 15 4 25 2c-3 6-3 14-1.500 20z" fill="#1259b8" /><path d="M1 24c8-2 18-2 26 1v2.500H.5z" fill="#a9cdf2" /></svg>
      </TaskCell>
      <TaskCell open>
        <svg viewBox="0 0 30 30" className="size-[30px]">
          <circle cx="16" cy="5" r="4.500" fill="#7b83eb" /><circle cx="25" cy="6.500" r="3.200" fill="#5059c9" />
          <path d="M20 11.500h9.500V20c0 4-5 5-7 3z" fill="#5059c9" /><path d="M9 11.500h13V21c0 8-13 8-13 0z" fill="#7b83eb" />
          <rect y="6.500" width="15" height="15.500" rx="1" fill="#4b53bc" />
          <path d="M4 10.500h7M7.500 10.500v8.500" stroke="#fff" strokeWidth="2" />
          <circle cx="24" cy="24" r="6" fill="#8cbd18" stroke="#fff" /><path d="M21 24l2.300 2.300 4-4.300" fill="none" stroke="#fff" strokeWidth="1.600" />
        </svg>
      </TaskCell>
      <TaskCell open>
        <div className="h-[23px] w-7 border border-t-[3px] border-[#a5a9ad] bg-black pl-[3px] pt-[2px] font-['DejaVu_Sans_Mono',monospace] text-[6px] leading-[6px] text-[#ccc]">C:\_</div>
      </TaskCell>
      <TaskCell open>
        <svg viewBox="0 0 27 26" className="h-[26px] w-[27px]"><rect x="1" y="0" width="25" height="25" rx="1.500" fill="#dba752" /><path d="M1 2h25v3H1z" fill="#f3d49a" /><path d="M2 0h2v25H2z" fill="#a87a2e" /><circle cx="14.500" cy="9.500" r="3.500" fill="#5b4420" /><path d="M8 19c0-4 3-3.500 5-5h3c2 1.500 5 1 5 5z" fill="#5b4420" /></svg>
      </TaskCell>
      <TaskCell open stacked>
        <svg viewBox="0 0 30 28" className="h-7 w-[30px]">
          <path d="M1 16C3 6 14 2 22 5c7 3 6 13 1 18-5 4-9 4-12 2 0-4-3-3-5-3s-6-2-5-6z" fill="#bddcf0" />
          <circle cx="6" cy="15" r="2.300" fill="#e0443c" /><circle cx="11" cy="10" r="2.300" fill="#6fbf3a" /><circle cx="17" cy="8" r="2.300" fill="#f2b632" /><circle cx="12" cy="17" r="2" fill="#333" />
          <path d="M27 3L17 27" stroke="#d98a2b" strokeWidth="2.200" /><path d="M23 1l6-1 1 3-4 5-3-2z" fill="#d9aa72" />
        </svg>
      </TaskCell>
      <div className="ml-auto flex items-center">
        <svg viewBox="0 0 16 9" className="mt-[-2px] h-[9px] w-4" fill="none" stroke="#fff" strokeWidth="1.300"><path d="M.5 8.500L8 1l7.500 7.500" /></svg>
        <svg viewBox="0 0 20 20" className="ml-3 size-5" fill="none" stroke="#fff" strokeWidth="1.200">
          <path d="M.7 3L19.300.7V18M.7 3v14.500l10 1" /><path d="M5 9.500a4.500 4.500 0 0 1 8-2M13.500 4v3.700H10M5.500 14.500v-4h4M5.500 14l4-.5" />
          <circle cx="15.500" cy="15.500" r="4.500" fill="#ff9800" stroke="none" />
        </svg>
        <svg viewBox="0 0 20 14" className="ml-[10px] h-[14px] w-5" fill="none" stroke="#fff"><path d="M1 0v4h5V0M2 4v2c0 2 3 2 3 0V4M3.500 7v5.500H18V10h1.500V6H18V3.500H7.500" strokeWidth="1.200" /><path d="M6 5.500h10.500v5.500H6z" fill="#fff" stroke="none" /></svg>
        <svg viewBox="0 0 16 16" className="ml-[13px] size-4" fill="none" stroke="#fff" strokeWidth="1.200"><path d="M.7 16C.7 7 7 1 15.500 1" opacity=".5" /><path d="M4.500 16c0-6.500 4.500-11 11-11M8.500 16c0-4 3-7 7-7" /><circle cx="13.500" cy="14" r="1.500" fill="#fff" stroke="none" /></svg>
        <svg viewBox="0 0 19 14" className="ml-[11px] h-[14px] w-[19px]" fill="none" stroke="#fff" strokeWidth="1.200"><path d="M1 4.500h2.500L7 1v12L3.500 9.500H1zM11 3.500l7 7M18 3.500l-7 7" /></svg>
        <svg viewBox="0 0 20 13" className="ml-[11px] h-[13px] w-5"><path d="M3 11A4.500 4.500 0 0 1 4 3a6 6 0 0 1 10.500 1L10 11z" fill="#b5b5b3" /><path d="M5 13a3 3 0 0 1-.5-5.500C7 4 12 4 14 6c4-1.500 7 2 5.500 5.500L18 13z" fill="#fff" /></svg>
        <Fit className="ml-[13px] w-[29px] text-[15px]">ENG</Fit>
        <div className="ml-[16px] flex w-[67px] flex-col items-center gap-[8px] text-[15px]">
          <Fit className="w-[35px]">15:08</Fit>
          <Fit className="w-[67px]">16-Apr-21</Fit>
        </div>
        <svg viewBox="0 0 30 32" className="ml-[25px] mr-[15px] h-8 w-[30px]">
          <path d="M0 6h20v17H9l-3 4v-4H0z" fill="#fff" />
          <path d="M3.500 10h13M3.500 14h13M3.500 18h7" stroke="#3f3c36" strokeWidth="1.200" />
          <circle cx="19.300" cy="21.500" r="10" fill="#35332f" stroke="#8a8884" />
          <text x="19.300" y="26.500" textAnchor="middle" fill="#fff" fontSize="13.500" fontWeight="600">2</text>
        </svg>
        <div className="mr-[5px] h-[50px] w-px bg-[#7d7b76]" />
      </div>
    </footer>
  );
}

export default function App() {
  return (
    <div className="flex h-[1080px] w-[1920px] flex-col overflow-hidden bg-white font-['Open_Sans',sans-serif]">
      <main className="flex h-[1030px] w-full shrink-0">
        <Browser />
        <Acrobat />
      </main>
      <Taskbar />
    </div>
  );
}
